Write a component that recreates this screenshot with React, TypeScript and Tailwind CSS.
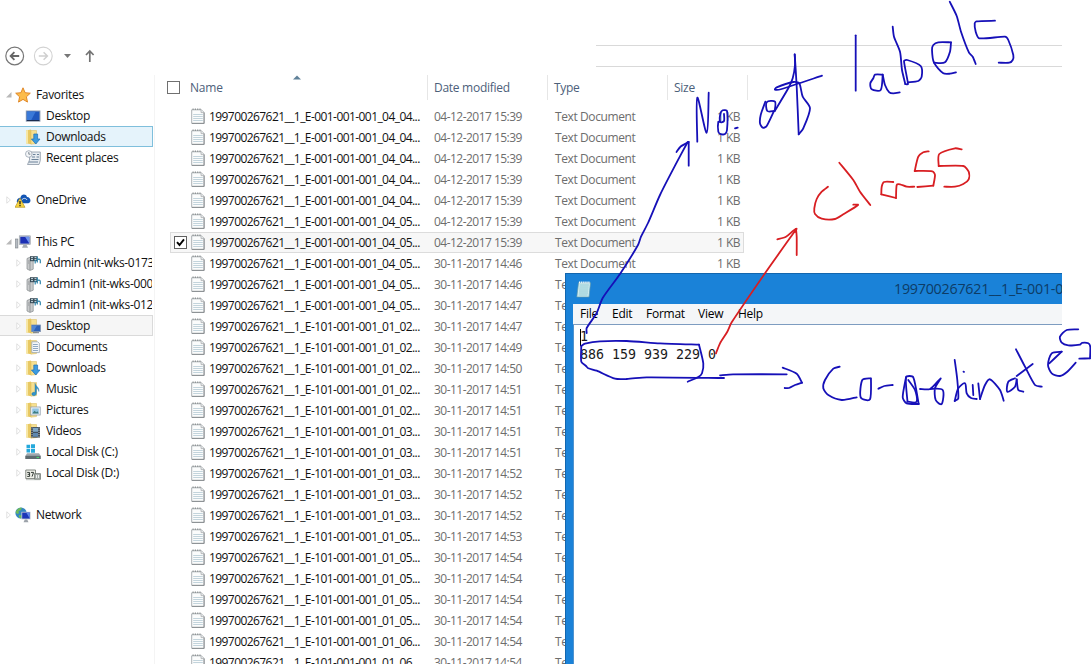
import React from 'react';

type IconName =
  | 'star' | 'screen' | 'downloads' | 'recent' | 'onedrive' | 'pc' | 'server'
  | 'desktop' | 'documents' | 'music' | 'pictures' | 'videos' | 'diskC' | 'diskD' | 'network';

const folder = (
  <>
    <path d="M1 1.5 6 .5v14.8L1 14.3z" fill="#e8c862" />
    <path d="M1 1.5 3 1v13.7l-2-.4z" fill="#f7e7a6" />
    <path d="M6 1.5h5.5v13L6 15.2z" fill="#f6df8f" stroke="#d9b95a" strokeWidth=".5" />
  </>
);

const icons: Record<IconName, React.ReactNode> = {
  star: <path d="M8 .8 10.1 5.7l5.2.5-3.9 3.6 1.1 5.3L8 12.4l-4.5 2.7 1.1-5.3L.7 6.2l5.2-.5z" fill="#fcbc4c" stroke="#dc7f1c" strokeWidth=".9" />,
  screen: (
    <>
      <rect x=".8" y="2.5" width="14.6" height="11.2" fill="#8d9bb0" />
      <rect x="1.8" y="3.5" width="12.6" height="9" fill="#1f57bd" />
      <path d="M1.8 3.5h9L6 12.5H1.8z" fill="#3a79d8" />
      <path d="M1.8 12.5h12.6" stroke="#1a2c50" />
    </>
  ),
  downloads: (
    <>
      {folder}
      <path d="M8.8 5h3.8v5H15l-4.2 5L6.4 10h2.4z" fill="#3b9be0" stroke="#1c6db5" strokeWidth=".7" />
    </>
  ),
  recent: (
    <>
      <path d="M5.5 2h9.8v8.5L14 14.5H2.5L4.5 10V6z" fill="#e7ecf1" stroke="#8a97a5" strokeWidth=".8" />
      <path d="M8 4.5h2.5M12 4.5h2M7 7h3M11.5 7h2.5M6.5 9.5h7M4 12h9" stroke="#6c8299" />
      <circle cx="3.8" cy="4" r="3.3" fill="#f4f6f8" stroke="#9aa5b1" strokeWidth=".8" />
      <path d="M3.8 2v2.2h1.6" fill="none" stroke="#65717e" strokeWidth=".8" />
    </>
  ),
  onedrive: (
    <>
      <path d="M2 10.5C1 7 4 5.3 5.5 5.7 6 2 11 1.4 12 5c4 .2 4.6 5.5 1.4 6.2H4z" fill="#1456b4" />
      <path d="M6.5 8.5C8 5.5 11 6 12 8" fill="none" stroke="#fff" strokeWidth=".8" />
      <path d="M5 6.3 10 15.3H0z" fill="#f7d33d" stroke="#b79a25" strokeWidth=".7" />
      <path d="M5 9v3.2M5 13v1.2" stroke="#222" strokeWidth="1.3" />
    </>
  ),
  pc: (
    <>
      <rect x=".5" y="5" width="2.4" height="9" fill="#b6bcc2" stroke="#7c8288" strokeWidth=".6" />
      <rect x="4.2" y="1.8" width="11.2" height="8.9" fill="#c2c8d0" stroke="#8d949e" strokeWidth=".5" />
      <rect x="5.3" y="2.8" width="9" height="6.8" fill="#1c2fb4" />
      <path d="M10 2.8h4.3v6.8z" fill="#6e94ef" />
      <path d="M8.5 10.7h3l1.6 3H7z" fill="#a6abb2" />
    </>
  ),
  server: (
    <>
      <path d="M2 3.5 5.5 2l2.7 1v11.2L5 15.5 2 14z" fill="#c9cbcc" stroke="#84898d" strokeWidth=".7" />
      <path d="M5 4.5V15M3 6h1.2M3 8h1.2" stroke="#7c8184" strokeWidth=".7" />
      <path d="M5 1.2h7.5v5H5z" fill="#3a4d59" />
      <path d="M6 2.6h2M9.5 2.6h2M6 4.6h2M9.5 4.6h2" stroke="#d6e8ee" strokeWidth=".9" />
      <path d="M10.2 8.5V5M12.3 7.5V1.5M12.3 5c1-1.6 3-1 3 .6v2.6" fill="none" stroke="#2f86ac" strokeWidth="1.2" />
    </>
  ),
  desktop: (
    <>
      {folder}
      <rect x="6.6" y="7" width="8.8" height="6.6" fill="#2d62b8" stroke="#7f93b0" strokeWidth=".8" />
      <path d="M7 7.4h5l-3.4 5.8H7z" fill="#4f86d4" />
      <path d="M8 14.7h6" stroke="#707a88" />
    </>
  ),
  documents: (
    <>
      {folder}
      <path d="M6.8 2.8h6l1.6 1.6v9.2H6.8z" fill="#f5f8fb" stroke="#8e9cab" strokeWidth=".7" />
      <path d="M8 5.5h4.8M8 7.5h5M8 9.5h5M8 11.5h5" stroke="#7593b5" strokeWidth=".8" />
    </>
  ),
  music: (
    <>
      {folder}
      <path d="M10 2.3c.4 3 4.7 4 3.8 8.2-.2-2-1.4-3-2.4-3.4v5.2c0 3-4.6 3-4.6.7 0-1.6 1.8-2 3.2-1.6z" fill="#2f94cc" stroke="#1f6fa0" strokeWidth=".4" />
    </>
  ),
  pictures: (
    <>
      {folder}
      <rect x="5.8" y="5" width="9.4" height="8" fill="#f8fafb" stroke="#8e9cab" strokeWidth=".8" />
      <rect x="7.2" y="6.4" width="6.6" height="5.2" fill="#8fc4e4" />
      <path d="m7.2 11.6 2.4-2.8 1.6 1.4 1.2-1 1.4 2.4z" fill="#3d7c80" />
    </>
  ),
  videos: (
    <>
      {folder}
      <rect x="6" y="4" width="9" height="10.6" fill="#39444e" />
      <rect x="8" y="4.8" width="5" height="4" fill="#7da6c6" />
      <rect x="8" y="9.8" width="5" height="4" fill="#5d87ae" />
      <path d="M7 4.5v10M14 4.5v10" stroke="#dfe5ea" strokeWidth=".9" strokeDasharray="1.1 1.1" />
    </>
  ),
  diskC: (
    <>
      <path d="M1.5.8h3.6v3.4H1.5zM6 .3h4v3.9H6zM1.5 5h3.6v3.4H1.5zM6 5h4v3.8H6z" fill="#25a9dc" />
      <path d="M2 9.3h12l1.6 2.5v3.2H.4v-3z" fill="#9fa7ad" />
      <path d="M.4 11.8h15.2V15H.4z" fill="#5f6b70" />
      <path d="M11.5 13.4h2.6" stroke="#4ce070" />
    </>
  ),
  diskD: (
    <>
      <path d="M.8 5h9.7v8.6H.8z" fill="#f0f1ea" stroke="#757b74" strokeWidth=".9" />
      <path d="M2.2 7.4h2.4v4H2.2M2.6 9.3h2M6 7.4h2.6L7 11.6" fill="none" stroke="#2f3833" strokeWidth="1" />
      <path d="M9.6 8.6h5.8v5.8H9.6z" fill="#a9b0ab" stroke="#69716b" strokeWidth=".8" />
      <path d="M11.5 10v3M13.5 10v3" stroke="#fff" strokeWidth=".8" />
      <path d="M1 14.7h14" stroke="#aeb4b0" strokeWidth=".8" />
    </>
  ),
  network: (
    <>
      <circle cx="6" cy="6" r="5.6" fill="#3487c2" />
      <path d="M2 2.8C4 .5 6 .4 7 1L5.5 3.4 3.6 4l.4 2.2L2.2 7 .6 5.2zM4 8l3 .6-1.3 2.9C4 11 3.4 9.4 4 8z" fill="#6cba59" />
      <rect x="6.4" y="4.8" width="9.2" height="7.6" fill="#c3c9d2" />
      <rect x="7.2" y="5.6" width="7.6" height="6" fill="#1c36b8" />
      <path d="M11.2 5.6h3.6v6z" fill="#5f86e8" />
      <path d="M9.8 12.4h2.4l1.3 2.8h-5z" fill="#9da3aa" />
    </>
  ),
};

function Icon({ name }: { name: IconName }) {
  return (
    <svg className="h-4 w-4 shrink-0" viewBox="0 0 16 16">
      {icons[name]}
    </svg>
  );
}

type NavItem = {
  label: string;
  icon: IconName;
  root?: boolean;
  open?: boolean;
  leaf?: boolean;
  state?: 'hover' | 'current';
} | null;

const nav: NavItem[] = [
  { label: 'Favorites', icon: 'star', root: true, open: true },
  { label: 'Desktop', icon: 'screen', leaf: true },
  { label: 'Downloads', icon: 'downloads', leaf: true, state: 'hover' },
  { label: 'Recent places', icon: 'recent', leaf: true },
  null,
  { label: 'OneDrive', icon: 'onedrive', root: true },
  null,
  { label: 'This PC', icon: 'pc', root: true, open: true },
  { label: 'Admin (nit-wks-0173', icon: 'server' },
  { label: 'admin1 (nit-wks-000', icon: 'server' },
  { label: 'admin1 (nit-wks-012', icon: 'server' },
  { label: 'Desktop', icon: 'desktop', state: 'current' },
  { label: 'Documents', icon: 'documents' },
  { label: 'Downloads', icon: 'downloads' },
  { label: 'Music', icon: 'music' },
  { label: 'Pictures', icon: 'pictures' },
  { label: 'Videos', icon: 'videos' },
  { label: 'Local Disk (C:)', icon: 'diskC' },
  { label: 'Local Disk (D:)', icon: 'diskD' },
  null,
  { label: 'Network', icon: 'network', root: true },
];

function NavRow({ item }: { item: NavItem }) {
  if (!item) return <div className="h-[21px] shrink-0" />;
  const tone =
    item.state === 'hover'
      ? 'border-[#7fbfdc] bg-[#e5f3fb]'
      : item.state === 'current'
        ? 'border-[#dadada] bg-[#f6f6f6]'
        : 'border-transparent';
  return (
    <div className={`flex h-[21px] w-[153px] shrink-0 items-center border border-l-0 ${tone} ${item.root ? 'pl-[5px]' : 'pl-[15px]'}`}>
      <svg className="mr-[2px] h-2 w-2 shrink-0" viewBox="0 0 8 8">
        {item.open && <path d="M6.5 1v5.5H1z" fill="#b9b9b9" />}
        {!item.open && !item.leaf && <path d="M1.8.8 5.4 4 1.8 7.2z" fill="#fff" stroke="#dcdcdc" strokeWidth=".9" />}
      </svg>
      <Icon name={item.icon} />
      <span className="ml-[5px] flex-1 overflow-hidden whitespace-nowrap">{item.label}</span>
    </div>
  );
}

const files: [string, string][] = [
  ['001-001-001_04_04', '04-12-2017 15:39'],
  ['001-001-001_04_04', '04-12-2017 15:39'],
  ['001-001-001_04_04', '04-12-2017 15:39'],
  ['001-001-001_04_04', '04-12-2017 15:39'],
  ['001-001-001_04_04', '04-12-2017 15:39'],
  ['001-001-001_04_05', '04-12-2017 15:39'],
  ['001-001-001_04_05', '04-12-2017 15:39'],
  ['001-001-001_04_05', '30-11-2017 14:46'],
  ['001-001-001_04_05', '30-11-2017 14:46'],
  ['001-001-001_04_05', '30-11-2017 14:47'],
  ['101-001-001_01_02', '30-11-2017 14:47'],
  ['101-001-001_01_02', '30-11-2017 14:49'],
  ['101-001-001_01_02', '30-11-2017 14:50'],
  ['101-001-001_01_02', '30-11-2017 14:51'],
  ['101-001-001_01_02', '30-11-2017 14:51'],
  ['101-001-001_01_03', '30-11-2017 14:51'],
  ['101-001-001_01_03', '30-11-2017 14:51'],
  ['101-001-001_01_03', '30-11-2017 14:52'],
  ['101-001-001_01_03', '30-11-2017 14:52'],
  ['101-001-001_01_03', '30-11-2017 14:52'],
  ['101-001-001_01_05', '30-11-2017 14:53'],
  ['101-001-001_01_05', '30-11-2017 14:54'],
  ['101-001-001_01_05', '30-11-2017 14:54'],
  ['101-001-001_01_05', '30-11-2017 14:54'],
  ['101-001-001_01_05', '30-11-2017 14:54'],
  ['101-001-001_01_06', '30-11-2017 14:54'],
  ['101-001-001_01_06', '30-11-2017 14:54'],
];

function FileIcon() {
  return (
    <svg className="-mt-px h-4 w-[14px] shrink-0" viewBox="0 0 14 16">
      <path d="M.7 1.8h9.6l2.8 2.6v11H.7z" fill="#fbfcfc" stroke="#a3a8ab" strokeWidth=".9" />
      <path d="M1 15.4h12.1V4.5" fill="none" stroke="#85898c" strokeWidth=".9" />
      <path d="M10 2v2.6h3" fill="#e5e8ea" stroke="#a3a8ab" strokeWidth=".7" />
      <path d="M1.5 1.2h9" stroke="#8f9496" strokeWidth="1.4" strokeDasharray="1.2 1.1" />
      <path d="M2.2 6.5h9.6M2.2 8.5h9.6M2.2 10.5h9.6M2.2 12.5h9.6" stroke="#bccfd8" strokeWidth=".9" />
    </svg>
  );
}

function FileRow({ file, checked }: { file: [string, string]; checked: boolean }) {
  return (
    <div className={`flex h-[21px] w-[574px] shrink-0 items-center border ${checked ? 'border-[#dcdcdc] bg-[#f7f7f7]' : 'border-transparent'}`}>
      <div className="flex w-5 shrink-0 items-center pl-[3px]">
        {checked && (
          <svg className="h-[13px] w-[13px]" viewBox="0 0 13 13">
            <rect x=".5" y=".5" width="12" height="12" fill="#fff" stroke="#606060" />
            <path d="m3 6.2 2.5 2.8L10 3.4" fill="none" stroke="#000" strokeWidth="1.9" />
          </svg>
        )}
      </div>
      <FileIcon />
      <span className="ml-1 w-[225px] whitespace-nowrap tracking-[-0.57px]">{`199700267621__1_E-${file[0]}...`}</span>
      <span className="w-[121px] whitespace-nowrap tracking-[-0.53px] text-[#6d6d6d]">{file[1]}</span>
      <span className="w-[120px] whitespace-nowrap tracking-[-0.4px] text-[#6d6d6d]">Text Document</span>
      <span className="flex-1 whitespace-nowrap pr-[3px] text-right tracking-[-0.5px] text-[#6d6d6d]">1 KB</span>
    </div>
  );
}

const blueInk = [
  '586.7,333 586.7,328 596.7,313 602.7,298 620,274 638,245 641,236.7 648,223 660,195 675,165.7 687.7,142',
  '676.5,152 680.7,146.5 688.7,142',
  '688.7,142 688.7,165.7',
  '697.3,141.7 697.3,97.7 706.7,132.7 708.7,92.7',
  '720.3,122 718.3,121.7 718.3,131.7 720.3,134 725,134 727,130 727,111 722.7,110.3 720.3,114 720.3,122 724,121 724,114',
  '735,128.3 737.7,127.7',
  '765.3,101.7 760.7,115 760,123.3 762.7,127.7 766.7,126 774,111',
  '774,111 767.3,111 766.7,102.3 775,101.7 774.7,111',
  '774.7,111 788.3,88.3 792.7,78.3 795,65 794.7,54.3',
  '794.7,54.3 796.7,86.7 798.7,134.3',
  '798.7,134.3 803.3,128.3 810,108.3 802.7,96.7 799.3,83.3 793.3,82 776.7,87.3 775,89.7 781.7,89 822,75.7',
  '855.7,35.3 855.7,90.7',
  '882.7,74.7 875,74.7 873.3,78.3 870.3,83.3 871.7,89.3 880.7,90 882.7,74.7',
  '882.7,74.7 885,85 889.3,92.3 893.3,93.3 899.7,92.3',
  '892.7,26.7 894,36.7 900,51.7 902,70 905.3,84',
  '905.3,84 908,84 904,61 907.3,60 920.7,66 921.7,76.7 918.3,81 908,82.3',
  '934,62.7 945,62.3 950,51.7 951,42.3',
  '951,42.3 938.3,42.3 933.3,45 932,50 934,62.7 943.3,73.3 950,73.7 956,72.3',
  '949.7,1.7 956.7,16 961,31.7 969,52.7 972.7,56.7 975.7,64',
  '995,20.7 976.7,21.3 974.7,23.3 975.7,31.7 979.3,38.3 1005,36.7 1008.3,40 1013.3,55 1012.7,60 1009.3,62.7 998.7,62.7',
  '687.7,381.7 698.3,377 702,373.3 703.3,363.3 699,344.7',
  '699,344.7 660,343.3 626.7,341 600,341.3 585,343.7 581.3,346',
  '581.3,346 581.3,361.7 586,366 588.3,368.3 596.7,370.7 615,378.7 626.7,379 646.7,377.3 724,378',
  '720,375.3 733,374.3 786.7,374.3',
  '782.7,367.7 796.7,373.7 802,382.7',
  '802,382.7 795,385 789,388 784.7,388',
  '839.7,366.7 833.3,368.7 825,380 823.3,388.3 828.3,395 841.7,400 856.7,397.3',
  '870.7,378.3 862.3,380 860.7,397.3 870,399.3 871,378.3',
  '878.3,388.7 884.3,386 892.7,385',
  '906,377.3 902.7,397.3 906.7,403.3 918.7,404',
  '918.7,404 913.3,377.3 906,377.3 907.5,401.7',
  '907.5,401.7 916.7,401.7 915,390 908.3,380',
  '920,389 930,389 940.7,378.3 935,388.3 935.7,400 941.7,404 942.7,390 930,389',
  '954.7,360 957.3,380 958.3,398.3 954.7,401',
  '954.7,401 958.3,388.3 965,383.3 966.7,393.3 971,398 976.7,399',
  '972.7,385 973.3,395',
  '963.5,371.7 964,371.9',
  '978.3,383.3 980,399',
  '980,399 985,385 990,379.3 1000,390 1003.7,400.7',
  '1015,378.3 1008.3,381.7 1007.3,391.7 1015,386.7 1016.7,379.3',
  '1016.7,379.3 1018.3,390 1023.3,391.7',
  '1016,349.3 1025,366.7 1035,385 1041.7,386.7',
  '1016.7,376 1032.7,364',
  '1049.3,363.3 1061.7,351.7',
  '1061.7,351.7 1051.7,353.3 1048,365 1051.7,373.3 1060,376 1067,372 1075.7,362.7',
  '1078.3,329.3 1066.7,330 1060,336.7 1061.7,342.7 1068.3,345.3 1080,344.7 1082,342.8 1088.3,343.3 1090.3,347 1090,358.3',
  '1090,358.3 1079.3,358.7',
];

const redInk = [
  '716,353.3 720,343.3 727.3,331.7 731.7,322.3 765,273.3 795.7,230',
  '777.3,239.3 786,236.7 793.3,230.7 796.7,228.7 795,232',
  '796,229 796.7,236.7 796.7,255',
  '828,186.7 821.7,191.7 816.7,199 814.3,208.3 815,214 821.7,218.7 835,219 843.3,214.3 858,205 853.3,204.7',
  '839.3,162.7 853.3,180 860,191.7 870.3,205',
  '893.3,182 884,182 881.7,186.7 881.3,194.3',
  '881.3,194.3 896,198',
  '896,198 896.7,185 900,184.3 906.7,186.7 914.3,186.7',
  '928.7,151.3 923.3,152.3 918.3,156.7 914.7,171',
  '914.7,171 932.3,171.3 935,175 933.3,185.7',
  '933.3,185.7 917.3,187',
  '961.7,149.3 955,148.3 939.3,154 938.7,166',
  '938.7,166 963.3,166 968.7,171.7 968.7,179.3 963.3,184 955,186.7 944.3,186.7',
];

/** Turns a list of pen samples into a gently rounded stroke. */
function stroke(samples: string) {
  const p = samples.split(' ').map((s) => s.split(',').map(Number));
  let d = `M${p[0][0]} ${p[0][1]}`;
  for (let i = 0; i < p.length - 1; i++) {
    const a = p[i];
    const b = p[i + 1];
    const before = p[i - 1] ?? a;
    const after = p[i + 2] ?? b;
    const len = Math.hypot(b[0] - a[0], b[1] - a[1]);
    const handle = (from: number[], to: number[]) => {
      const span = Math.hypot(to[0] - from[0], to[1] - from[1]) || 1;
      return Math.min(0.16, (len * 0.25) / span);
    };
    const ka = handle(before, b);
    const kb = handle(a, after);
    d += ` C${a[0] + (b[0] - before[0]) * ka} ${a[1] + (b[1] - before[1]) * ka} ${b[0] - (after[0] - a[0]) * kb} ${b[1] - (after[1] - a[1]) * kb} ${b[0]} ${b[1]}`;
  }
  return d;
}

function Ink() {
  return (
    <svg className="pointer-events-none absolute inset-0 h-[664px] w-[1091px]" viewBox="0 0 1091 664" fill="none" strokeLinecap="round" strokeLinejoin="round" strokeWidth="1.8">
      <g stroke="#1610b8">{blueInk.map((p) => <path key={p} d={stroke(p)} />)}</g>
      <g stroke="#d81e22">{redInk.map((p) => <path key={p} d={stroke(p)} />)}</g>
    </svg>
  );
}

function Toolbar() {
  return (
    <div className="flex h-[75px] shrink-0 pt-[45px]">
      <svg className="ml-[4px] h-[22px] w-[100px]" viewBox="0 0 100 22" fill="none">
        <circle cx="10.7" cy="11" r="8.9" stroke="#777" strokeWidth="1.2" />
        <path d="M15.2 11H6.8m3.6-3.8L6.6 11l3.8 3.8" stroke="#666" strokeWidth="1.8" />
        <circle cx="39.3" cy="11" r="8.9" stroke="#d2d2d2" strokeWidth="1.1" />
        <path d="M34.8 11h8.4m-3.6-3.8 3.8 3.8-3.8 3.8" stroke="#cfcfcf" strokeWidth="1.5" />
        <path d="M60 9h7l-3.5 4z" fill="#777" />
        <path d="M85.8 17V6.5M82 10l3.8-4 3.8 4" stroke="#737373" strokeWidth="1.7" />
      </svg>
      <div className="ml-[492px] h-[22px] w-[466px] border-y border-[#d9d9d9]" />
    </div>
  );
}

function ListHeader() {
  return (
    <div className="flex h-[31px] shrink-0 pl-3 tracking-[-0.28px] text-[#4c607a]">
      <div className="relative flex h-[25px] w-[261px] items-center border-r border-[#e6e6e6]">
        <div className="h-[13px] w-[13px] border border-[#707070] bg-white" />
        <span className="ml-[10px] tracking-[-0.2px]">Name</span>
        <svg className="absolute left-[126px] top-0 h-[5px] w-[8px]" viewBox="0 0 8 5">
          <path d="M0 4.5 4 .5l4 4z" fill="#5f8199" />
        </svg>
      </div>
      <div className="flex h-[25px] w-[120px] items-center border-r border-[#e6e6e6] pl-[6px]">Date modified</div>
      <div className="flex h-[25px] w-[120px] items-center border-r border-[#e6e6e6] pl-[6px]">Type</div>
      <div className="flex h-[25px] w-[80px] items-center border-r border-[#e6e6e6] pl-[6px]">Size</div>
    </div>
  );
}

function Notepad() {
  return (
    <div className="absolute left-[565px] top-[273px] flex h-[391px] w-[497px] flex-col overflow-hidden border-l border-t border-[#1266ae] bg-[#1a82d8] pl-[7px]">
      <div className="flex h-[30px] shrink-0 items-center">
        <svg className="ml-[3px] h-[17px] w-4 shrink-0" viewBox="0 0 16 17">
          <path d="M2.5 1.8h12L13 16H.8z" fill="#d3eef2" stroke="#5f98aa" strokeWidth=".7" />
          <path d="M3.6 4h9.3M3.4 6h9.3M3.2 8h9.3M3 10h9.2M2.8 12h9.2M2.6 14h9" stroke="#7dbdc9" strokeWidth=".8" />
          <path d="M3 1.3h11" stroke="#f7fafa" strokeWidth="1.8" strokeDasharray="1.3 .8" />
        </svg>
        <span className="ml-[302px] whitespace-nowrap text-[14.3px] tracking-[-0.25px] text-[#0d3c66]">199700267621__1_E-001-0</span>
      </div>
      <div className="flex h-[21px] shrink-0 items-center border-b border-[#7d9cc0] bg-[#f4f6f8] tracking-[-0.25px] text-black">
        <span className="w-8 pl-[7px]">File</span>
        <span className="w-[34px] pl-[7px]">Edit</span>
        <span className="w-[52px] pl-[7px]">Format</span>
        <span className="w-10 pl-[7px]">View</span>
        <span className="pl-[7px]">Help</span>
      </div>
      <div className="flex-1 border-l border-[#4f93cf] bg-white pl-[6px] pt-[3px] font-['DejaVu_Sans_Mono',monospace] text-[13.3px] leading-[18px] tracking-normal text-[#1a1a1a]">
        <div className="flex items-center">
          <span className="h-[17px] w-px bg-black" />
          <span className="-ml-px">1</span>
        </div>
        <div>886 159 939 229 0</div>
      </div>
    </div>
  );
}

export default function App() {
  return (
    <div className="relative flex h-[664px] w-[1091px] flex-col overflow-hidden bg-white font-['Open_Sans','Noto_Sans',sans-serif] text-[12px] leading-4 tracking-[-0.33px] text-[#111]">
      <Toolbar />
      <div className="flex min-h-0 flex-1">
        <div className="flex w-[155px] shrink-0 flex-col border-r border-[#f4f4f4] pt-[9px]">
          {nav.map((item, i) => <NavRow key={i} item={item} />)}
        </div>
        <div className="flex flex-1 flex-col overflow-hidden">
          <ListHeader />
          <div className="flex flex-col pl-[15px]">
            {files.map((f, i) => <FileRow key={i} file={f} checked={i === 6} />)}
          </div>
        </div>
      </div>
      <Notepad />
      <Ink />
    </div>
  );
}
